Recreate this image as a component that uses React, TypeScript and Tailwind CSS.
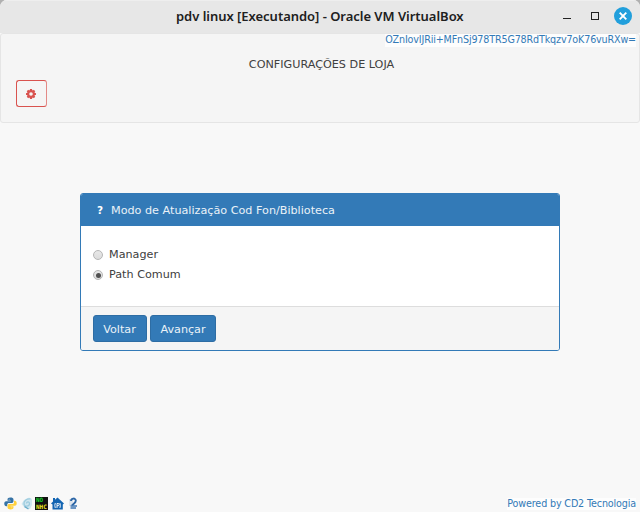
import React from "react";

function Gear() {
  return (
    <svg width="10" height="10" viewBox="-5 -5 10 10" fill="#d9534f" className="block">
      {[0, 45, 90, 135].map((a) => (
        <rect key={a} x="-1.1" y="-5" width="2.2" height="10" rx="0.3" transform={`rotate(${a})`} />
      ))}
      <circle r="3.9" />
      <circle r="1.8" fill="#f5f5f5" />
    </svg>
  );
}

function PythonIcon() {
  return (
    <svg width="13" height="13" viewBox="0 0 24 24">
      <path fill="#3572a5" d="M12 1C7 1 6.500 3 6.500 4.500V7H12.500V8H4C1.500 8 .5 10 .5 12.500S2 17 4 17H6V14C6 12 7.500 11 9 11H15C16.500 11 17.500 9.500 17.500 8V4.500C17.500 2 15 1 12 1Z" />
      <path fill="#ffd03b" d="M18.500 7V10C18.500 12 17 13 15 13H9C7.500 13 6.500 14.500 6.500 16V19.500C6.500 22 9 23 12 23C16.500 23 17.500 21 17.500 19.500V17H12V16H20C22.500 16 23.500 14 23.500 11.500S22 7 20 7Z" />
      <circle cx="9.500" cy="4" r=".8" fill="#fff" />
      <circle cx="14.500" cy="20" r=".8" fill="#fff" />
    </svg>
  );
}

function SwirlIcon() {
  return (
    <svg width="12" height="13" viewBox="0 0 12 13" fill="none">
      <path d="M8 .5L11 2V8L9 12L4 11L.5 7L3 3Z" fill="#cfe6ef" />
      <path d="M9.500 2C5.500 1.500 2.500 4 3 7S8.500 9.500 8.500 6.800S5.500 4.500 5.500 6.500" stroke="#9ccbde" strokeWidth="1.300" />
      <path d="M3.500 9.500L7.500 12" stroke="#62a9c8" strokeWidth="1.300" />
    </svg>
  );
}

function HouseIcon() {
  return (
    <svg width="13" height="13" viewBox="0 0 13 13">
      <path d="M6.500 .5L13 6.500L11.800 7.500V12.500H1.500V7.500L0 6.500L2 4.500V1H4V2.700Z" fill="#1264b2" />
      <path d="M4.300 6Q3.300 8.500 4.300 11M8.900 6Q9.900 8.500 8.900 11M6 11V6.500H7.200Q8.200 6.500 8.200 7.600T7.200 8.700H6" stroke="#fff" strokeWidth=".9" fill="none" />
    </svg>
  );
}

function TwoIcon() {
  return (
    <svg width="11" height="13" viewBox="0 0 11 13" fill="none">
      <path d="M1 2H5V9H1Z" fill="#dde4ec" />
      <path d="M3 4C3 .8 7.800 .8 7.800 3.800C7.800 6 5 7 4 8.500" stroke="#2c66a6" strokeWidth="1.900" />
      <path d="M2.500 9H9M2.500 11H8" stroke="#3e76b3" strokeWidth="1.500" />
    </svg>
  );
}

function Radio({ label, checked }: { label: string; checked?: boolean }) {
  return (
    <label className="flex h-5 items-center">
      <span className="flex size-[10px] items-center justify-center rounded-full border border-[#b5b5b5] bg-gradient-to-b from-[#e8e8e8] to-[#dcdcdc]">
        {checked && <span className="size-[5px] rounded-full bg-[#505050]" />}
      </span>
      <span className="ml-1.5">{label}</span>
    </label>
  );
}

export default function App() {
  return (
    <div className="bg-[#b0b0b0]">
      <div className="relative flex h-[512px] w-[640px] flex-col overflow-hidden rounded-t-[7px] bg-[#f8f8f8] font-['DejaVu_Sans',sans-serif] text-[11.2px] leading-4 text-[#404040]">
        <header className="flex h-[33px] shrink-0 items-center bg-[#e7e7e7] pb-px pl-[176px] shadow-[inset_0_1px_#eeeeee]">
          <h1 className="w-[288px] whitespace-nowrap font-['Noto_Sans',sans-serif] text-[13px] font-semibold tracking-[-0.03px] text-[#202020]">
            pdv linux [Executando] - Oracle VM VirtualBox
          </h1>
          <div className="ml-[99px] mt-[5px] h-px w-2 bg-[#222]" />
          <div className="ml-5 size-2 border border-[#222]" />
          <div className="ml-[15px] flex size-[18px] items-center justify-center rounded-full bg-[#219fdc]">
            <svg width="8" height="8" viewBox="0 0 8 8" stroke="#fff" strokeWidth="1.900">
              <path d="M.7 .7L7.300 7.300M7.300 .7L.7 7.300" />
            </svg>
          </div>
        </header>

        <section className="flex h-[90px] shrink-0 flex-col rounded-[3px] border border-[#e5e5e5] bg-[#f5f5f5] pt-[23px]">
          <div className="pl-[3px] text-center">CONFIGURAÇÕES DE LOJA</div>
          <button className="ml-[15px] mt-[7px] flex h-[27px] w-[31px] items-center justify-center rounded-[3px] border border-[#d9534f] border-r-[#e38a87] pr-px">
            <Gear />
          </button>
        </section>
        <div className="absolute right-1 top-[34px] h-[13px] whitespace-nowrap bg-[#fdfdfd] text-[9.6px] leading-3 tracking-[-0.16px] text-[#337ab7]">
          OZnIovIJRii+MFnSj978TR5G78RdTkqzv7oK76vuRXw=
        </div>

        <main className="mx-auto mt-[70px] h-[158px] w-[480px] shrink-0 overflow-hidden rounded-[3px] border border-[#337ab7] bg-white">
          <div className="flex h-8 items-center bg-[#337ab7] pl-4 text-white">
            <span className="w-[14px] text-[10.5px] font-bold">?</span>
            <span className="pt-px text-[#eaf2f8]">Modo de Atualização Cod Fon/Biblioteca</span>
          </div>
          <div className="h-20 pl-3 pt-[19px]">
            <Radio label="Manager" />
            <Radio label="Path Comum" checked />
          </div>
          <footer className="flex h-11 gap-[3px] border-t border-[#ddd] bg-[#f5f5f5] pl-3 pt-2 text-[#eaf2f8]">
            <button className="h-[27px] w-[54px] rounded-[3px] border border-[#2e6da4] bg-[#337ab7] pr-px pt-0.5">Voltar</button>
            <button className="h-[27px] w-[66px] rounded-[3px] border border-[#2e6da4] bg-[#337ab7] pt-0.5">Avançar</button>
          </footer>
        </main>

        <footer className="mt-auto flex h-[15px] shrink-0 items-start justify-between pl-1 pr-1">
          <div className="flex items-center">
            <PythonIcon />
            <span className="ml-1"><SwirlIcon /></span>
            <span className="ml-0.5 flex size-[13px] flex-col bg-[#111] pl-px font-['DejaVu_Sans_Mono',monospace] text-[6px] font-bold leading-[6.5px]">
              <span className="text-[#19d32c]">NO</span>
              <span className="text-[#efe51f]">NHC</span>
            </span>
            <span className="ml-[3px]"><HouseIcon /></span>
            <span className="ml-1"><TwoIcon /></span>
          </div>
          <span className="mt-px bg-[#fdfdfd] text-[9.6px] leading-3 tracking-[-0.15px] text-[#337ab7]">Powered by CD2 Tecnologia</span>
        </footer>
      </div>
    </div>
  );
}
